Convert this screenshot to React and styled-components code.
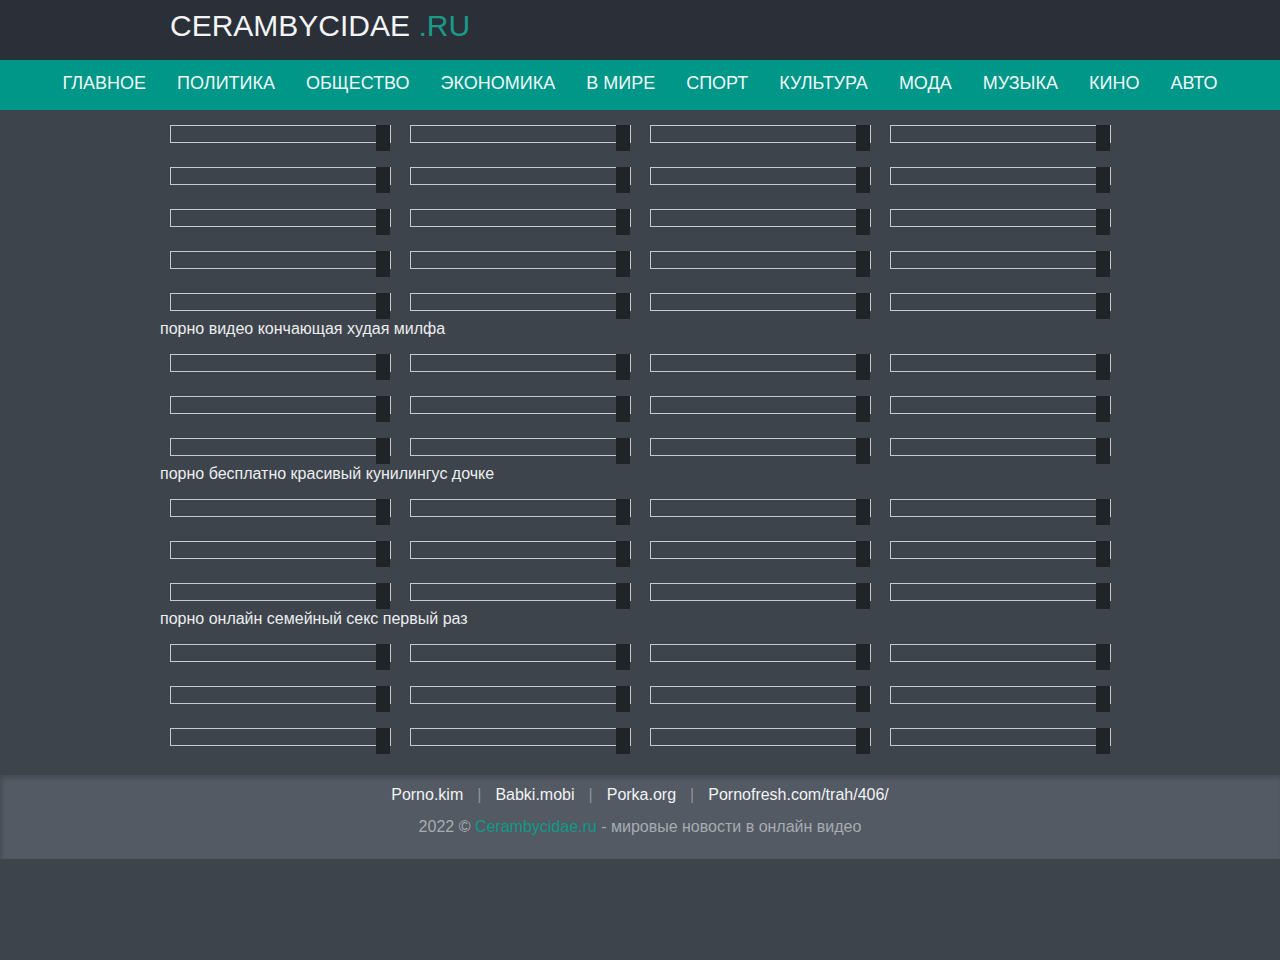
import React from 'react';
import styled, { createGlobalStyle } from 'styled-components';

const GlobalStyle = createGlobalStyle`
  html, body {
    margin: 0;
    padding: 0;
    background: #3e444c;
    font-family: "Liberation Sans", Arial, sans-serif;
  }
`;

const Header = styled.header`
  height: 60px;
  background: #2b3038;
`;

const HeaderInner = styled.div`
  width: 940px;
  margin: 0 auto;
  padding-top: 8px;
  font-size: 30px;
  line-height: 36px;
  color: #f2f4f5;
`;

const LogoTail = styled.span`
  color: #1a9a89;
`;

const Nav = styled.nav`
  height: 50px;
  background: #009688;
  display: flex;
  justify-content: center;
  align-items: center;
`;

const NavLink = styled.a`
  padding: 0 15.5px 4px;
  font-size: 18px;
  line-height: 20px;
  color: #eef8f7;
  text-decoration: none;
  text-transform: uppercase;
  cursor: pointer;
`;

const Main = styled.main`
  width: 960px;
  margin: 0 auto;
  padding: 15px 0 21px;
`;

const Grid = styled.div`
  display: grid;
  grid-template-columns: repeat(4, 240px);
  row-gap: 16px;
`;

const Cell = styled.div`
  padding-left: 10px;
  height: 26px;
`;

const Thumb = styled.div`
  position: relative;
  box-sizing: border-box;
  width: 221px;
  height: 18px;
  border: 1px solid #c6cacf;
`;

const Badge = styled.span`
  position: absolute;
  top: -1px;
  right: 0;
  width: 14px;
  height: 26px;
  background: #212427;
`;

const Caption = styled.div`
  font-size: 16px;
  line-height: 19px;
  color: #eceef0;
  margin: 0 0 16px;
`;

const Footer = styled.footer`
  background: #535a63;
  box-shadow: inset 2px 3px 4px rgba(0, 0, 0, 0.18);
  padding: 10px 0 22px;
  text-align: center;
  font-size: 16px;
`;

const FooterLinks = styled.div`
  line-height: 20px;
  color: #f1f3f5;
`;

const Sep = styled.span`
  padding: 0 14px;
  color: #8c939b;
`;

const Copy = styled.div`
  margin-top: 12px;
  line-height: 20px;
  color: #a7acb2;
`;

const SiteLink = styled.span`
  color: #0f9a88;
`;

const menu = ['Главное', 'Политика', 'Общество', 'Экономика', 'В мире', 'Спорт', 'Культура', 'Мода', 'Музыка', 'Кино', 'Авто'];

const groups = [
  { rows: 5, caption: 'порно видео кончающая худая милфа' },
  { rows: 3, caption: 'порно бесплатно красивый кунилингус дочке' },
  { rows: 3, caption: 'порно онлайн семейный секс первый раз' },
  { rows: 3 },
];

const links = ['Porno.kim', 'Babki.mobi', 'Porka.org', 'Pornofresh.com/trah/406/'];

const Block = ({ rows }) => (
  <Grid>
    {Array.from({ length: rows * 4 }).map((_, i) => (
      <Cell key={i}>
        <Thumb>
          <Badge />
        </Thumb>
      </Cell>
    ))}
  </Grid>
);

export default function App() {
  return (
    <>
      <GlobalStyle />
      <Header>
        <HeaderInner>
          CERAMBYCIDAE <LogoTail>.RU</LogoTail>
        </HeaderInner>
      </Header>
      <Nav>
        {menu.map((m) => (
          <NavLink key={m}>{m}</NavLink>
        ))}
      </Nav>
      <Main>
        {groups.map((g, i) => (
          <React.Fragment key={i}>
            <Block rows={g.rows} />
            {g.caption && <Caption>{g.caption}</Caption>}
          </React.Fragment>
        ))}
      </Main>
      <Footer>
        <FooterLinks>
          {links.map((l, i) => (
            <React.Fragment key={l}>
              {i > 0 && <Sep>|</Sep>}
              {l}
            </React.Fragment>
          ))}
        </FooterLinks>
        <Copy>
          2022 © <SiteLink>Cerambycidae.ru</SiteLink> - мировые новости в онлайн видео
        </Copy>
      </Footer>
    </>
  );
}
